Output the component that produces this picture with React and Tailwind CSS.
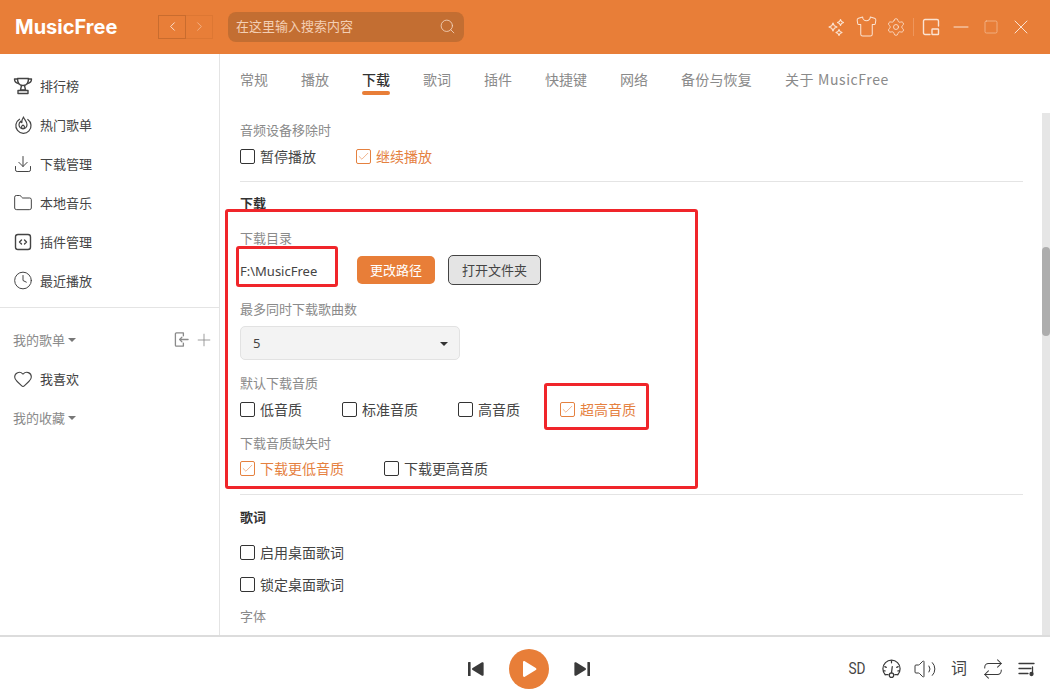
import React from "react";
import {
  Shirt, Settings, Minus, Square, X, ChevronLeft, ChevronRight, Search,
  Download, Folder, Clock, Heart, Plus, Check, Volume2, Repeat,
} from "lucide-react";

const sans = "font-['Noto_Sans_CJK_SC','Noto_Sans',sans-serif]";

function Trophy() {
  return (
    <svg viewBox="0 0 20 20" className="w-5 h-5" fill="none" stroke="currentColor" strokeWidth="1.4" strokeLinejoin="round" strokeLinecap="round">
      <path d="M4.5 2.5h11c0 3.5-.5 7-5.5 7s-5.5-3.5-5.5-7z" />
      <path d="M4.5 3H1.5c0 2.5 1.5 4 4 4.5M15.5 3h3c0 2.500-1.500 4-4 4.500" />
      <path d="M8.500 9.500 7.500 14h5l-1-4.500" />
      <path d="M5 14.500h10v3H5z" />
    </svg>
  );
}
function Hot() {
  return (
    <svg viewBox="0 0 20 20" className="w-5 h-5" fill="none" stroke="currentColor" strokeWidth="1.2" strokeLinecap="round" strokeLinejoin="round">
      <path d="M6.500 4.200A7.600 7.600 0 1 0 14.800 4.500" />
      <path d="M10.500 2c.3 2.200 3.500 4 3.500 7.800a4 4 0 0 1-8 0c0-1.700.8-2.800 1.800-3.600.1.800.4 1.200 1 1.500C8.700 5.500 9.500 3.500 10.500 2z" />
      <path d="M10 10c1 .6 1.500 1.300 1.500 2a1.500 1.500 0 0 1-3 0c0-.7.500-1.400 1.500-2z" />
    </svg>
  );
}
function CodeBox() {
  return (
    <svg viewBox="0 0 20 20" className="w-5 h-5" fill="none" stroke="currentColor" strokeWidth="1.4" strokeLinecap="round" strokeLinejoin="round">
      <rect x="2.500" y="2.500" width="15" height="15" rx="2.500" />
      <path d="M8.500 8 6.500 10l2 2M11.500 8l2 2-2 2" />
    </svg>
  );
}
function ImportIcon() {
  return (
    <svg viewBox="0 0 16 18" className="w-[15px] h-[17px]" fill="none" stroke="currentColor" strokeWidth="1.400" strokeLinecap="round" strokeLinejoin="round">
      <path d="M10 5V2H2.500a1 1 0 0 0-1 1v12a1 1 0 0 0 1 1H10v-3" />
      <path d="M15 9H6M8.500 6.500 6 9l2.500 2.500" />
    </svg>
  );
}
function Gauge() {
  return (
    <svg viewBox="0 0 22 22" className="w-[21px] h-[21px]" fill="none" stroke="currentColor" strokeWidth="1.300" strokeLinecap="round">
      <path d="M4.500 17.500A9 9 0 1 1 17.500 17.500" />
      <path d="M4.500 17.500h3M14.500 17.500h3" />
      <circle cx="11" cy="18" r="2.300" />
      <path d="M11 15.500 11.800 9M11 3v2M4 9l1.500.8M18 9l-1.500.8M2.800 13.500h1.500M19.200 13.500h-1.500" />
    </svg>
  );
}
function Queue() {
  return (
    <svg viewBox="0 0 18 18" className="w-[18px] h-[18px]" fill="none" stroke="currentColor" strokeWidth="1.300" strokeLinecap="round">
      <path d="M1 3.500h15M1 8.500h12M1 13.500h9" />
      <path d="M14.500 7v7" />
      <circle cx="13.500" cy="14" r="1.500" fill="currentColor" />
    </svg>
  );
}
function Prev() {
  return (
    <svg viewBox="0 0 18 16" className="w-[18px] h-4" fill="#3a3a3a">
      <rect x="1" y="1" width="2.600" height="14" rx=".6" />
      <path d="M5 8c0-.5.200-.8.600-1.100L15 1.300c.8-.4 1.600 0 1.600.9v11.600c0 .9-.8 1.300-1.600.9L5.600 9.100C5.200 8.800 5 8.500 5 8z" />
    </svg>
  );
}
function Stars() {
  return (
    <svg viewBox="0 0 18 18" className="w-[18px] h-[18px]" fill="none" stroke="currentColor" strokeWidth="1.100" strokeLinejoin="round">
      <path d="M6 5.500 8 9l-2 3.500L4 9H1l3-.0z" transform="translate(0 0)" opacity="0" />
      <path d="M6 5 7.300 7.700 10 9 7.300 10.300 6 13 4.700 10.300 2 9 4.700 7.700z" />
      <path d="M13.500 1.500 14.500 3.500 16.500 4.500 14.500 5.500 13.500 7.500 12.500 5.500 10.500 4.500 12.500 3.500z" />
      <path d="M12 11.500 13 13.500 15 14.500 13 15.500 12 17.500 11 15.500 9 14.500 11 13.500z" />
    </svg>
  );
}
function Pip() {
  return (
    <svg viewBox="0 0 18 18" className="w-[18px] h-[18px]" fill="none" stroke="currentColor" strokeWidth="1.400" strokeLinecap="round" strokeLinejoin="round">
      <path d="M8 16.500H3a1.500 1.500 0 0 1-1.500-1.500V3A1.500 1.500 0 0 1 3 1.500h12A1.500 1.500 0 0 1 16.500 3v5" />
      <rect x="10" y="11" width="6.500" height="5.500" rx=".5" />
    </svg>
  );
}

function NavItem({ icon, label }) {
  return (
    <div className="h-[39px] flex items-center pl-[13px] gap-[7px] text-[13px] text-[#444444]">
      <span className="w-5 h-5 flex items-center justify-center shrink-0 text-[#444444]">{icon}</span>
      <span>{label}</span>
    </div>
  );
}

function Caret() {
  return <span className="inline-block w-0 h-0 border-x-[4px] border-x-transparent border-t-[4px] border-t-[#777777] ml-[3px] mt-[1px]" />;
}

function Opt({ label, on }) {
  return (
    <div className={"flex items-center gap-[5px] h-[18px] mb-[2px] text-[14px] leading-[18px] " + (on ? "text-[#e5813f]" : "text-[#444444]")}>
      <span className={"w-[15px] h-[15px] rounded-[2px] border flex items-center justify-center shrink-0 " + (on ? "border-[#e5813f]" : "border-[#333333]")}>
        {on && <Check size={13} strokeWidth={1.100} />}
      </span>
      <span>{label}</span>
    </div>
  );
}

function Label({ children, className = "" }) {
  return <div className={"h-5 leading-[18px] text-[13px] text-[#8a8a8a] " + className}>{children}</div>;
}
function Head({ children, className = "" }) {
  return <div className={"h-5 leading-[18px] text-[13px] font-bold text-[#333333] " + className}>{children}</div>;
}

const tabs = ["常规", "播放", "下载", "歌词", "插件", "快捷键", "网络", "备份与恢复", "关于 MusicFree"];
const tabTrack = { "备份与恢复": "tracking-[0.2px]", "关于 MusicFree": "tracking-[0.6px]" };

function WinBtn({ children }) {
  return <span className="w-[30px] flex items-center justify-center shrink-0">{children}</span>;
}
function FootBtn({ children }) {
  return <span className="w-[34px] flex items-center justify-center shrink-0">{children}</span>;
}

export default function App() {
  return (
    <div className={"relative w-[1050px] h-[700px] overflow-hidden bg-white flex flex-col " + sans}>
      <header className="h-[54px] shrink-0 bg-[#e87e38] flex items-center text-[#fbe3d2]">
        <div className="w-[158px] pl-[15px] text-[20px] leading-none font-bold text-white font-['Inter',sans-serif] -mt-[1px]">MusicFree</div>
        <div className="flex h-6 -mt-[1px]">
          <div className="w-7 h-6 border border-[#c96c2e] flex items-center justify-center text-[#fdeadf]"><ChevronLeft size={15} strokeWidth={1.400} /></div>
          <div className="w-[27px] h-6 border border-l-0 border-[#dd7733] flex items-center justify-center text-[#f3b58c]"><ChevronRight size={15} strokeWidth={1.400} /></div>
        </div>
        <div className="ml-[15px] w-[236px] h-[30px] rounded-lg bg-[#c36e32] flex items-center pl-2 pr-[8px] justify-between -mt-[1px]">
          <span className="text-[13px] text-[#f3cfb5] pb-[2px]">在这里输入搜索内容</span>
          <Search size={17} strokeWidth={1.100} className="text-[#f6dcc9]" />
        </div>
        <div className="ml-auto flex items-center pr-[14px] -mt-[1px]">
          <WinBtn><Stars /></WinBtn>
          <WinBtn><Shirt size={23} strokeWidth={1.050} /></WinBtn>
          <WinBtn><Settings size={20} strokeWidth={1} /></WinBtn>
          <span className="w-px h-[18px] bg-[#ee965c] ml-[2px]" />
          <span className="ml-[2px] flex"><WinBtn><Pip /></WinBtn></span>
          <WinBtn><Minus size={24} strokeWidth={1} /></WinBtn>
          <WinBtn><Square size={16} strokeWidth={1} className="text-[#f6c5a3]" /></WinBtn>
          <WinBtn><X size={24} strokeWidth={1} /></WinBtn>
        </div>
      </header>

      <div className="flex-1 min-h-0 flex">
        <aside className="w-[220px] shrink-0 border-r border-[#e4e4e4] pt-[12px]">
          <NavItem icon={<Trophy />} label="排行榜" />
          <NavItem icon={<Hot />} label="热门歌单" />
          <NavItem icon={<Download size={22} strokeWidth={1.200} />} label="下载管理" />
          <NavItem icon={<Folder size={22} strokeWidth={1.200} />} label="本地音乐" />
          <NavItem icon={<CodeBox />} label="插件管理" />
          <NavItem icon={<Clock size={21} strokeWidth={1.200} />} label="最近播放" />
          <div className="mt-[7px] h-px bg-[#e4e4e4]" />
          <div className="mt-[12px] h-[39px] flex items-center pl-[13px] pr-[5px] text-[13px] text-[#8a8a8a]">
            <span>我的歌单</span><Caret />
            <span className="ml-auto flex items-center gap-[5px] text-[#8a8a8a]"><ImportIcon /><Plus size={20} strokeWidth={1} /></span>
          </div>
          <NavItem icon={<Heart size={20} strokeWidth={1.300} />} label="我喜欢" />
          <div className="h-[39px] flex items-center pl-[13px] text-[13px] text-[#8a8a8a]">
            <span>我的收藏</span><Caret />
          </div>
        </aside>

        <main className="flex-1 min-w-0 flex">
          <div className="flex-1 min-w-0 pl-5 pr-[19px]">
            <nav className="h-[52px] flex gap-[33px]">
              {tabs.map((t) => (
                <div key={t} className="pt-4 flex flex-col items-center">
                  <span className={"h-5 leading-[18px] text-[14px] " + (tabTrack[t] || "") + " " + (t === "下载" ? "text-[#333333] font-medium" : "text-[#8a8a8a]")}>{t}</span>
                  <span className={"mt-px h-1 w-full rounded-full " + (t === "下载" ? "bg-[#e87e38]" : "")} />
                </div>
              ))}
            </nav>
            <div className="pt-[15px]">
              <Label>音频设备移除时</Label>
              <div className="mt-[6px] flex gap-10"><Opt label="暂停播放" /><Opt label="继续播放" on /></div>
              <div className="mt-[14px] h-px bg-[#e4e4e4]" />
              <Head className="mt-[12px]">下载</Head>
              <Label className="mt-[15px]">下载目录</Label>
              <div className="mt-[6px] h-[30px] flex items-center">
                <span className="w-[117px] mt-[3px] text-[13px] text-[#444444] font-['Noto_Sans',sans-serif]">F:\MusicFree</span>
                <button className="w-[78px] h-7 rounded-[5px] bg-[#e87e38] text-white text-[13px]">更改路径</button>
                <button className="ml-[13px] w-[93px] h-[30px] rounded-[5px] bg-[#e4e4e4] border border-[#444444] text-[#444444] text-[13px]">打开文件夹</button>
              </div>
              <Label className="mt-[15px]">最多同时下载歌曲数</Label>
              <div className="mt-[6px] w-[220px] h-[34px] rounded-[5px] bg-[#f3f3f3] border border-[#e2e2e2] flex items-center pl-[12px] pr-[11px] justify-between text-[13px] text-[#444444]">
                <span className="font-['Noto_Sans',sans-serif] mt-[2px]">5</span>
                <span className="w-0 h-0 mt-[2px] border-x-[4px] border-x-transparent border-t-[4px] border-t-[#333333]" />
              </div>
              <Label className="mt-[14px]">默认下载音质</Label>
              <div className="mt-[6px] flex gap-10"><Opt label="低音质" /><Opt label="标准音质" /><Opt label="高音质" /><Opt label="超高音质" on /></div>
              <Label className="mt-[14px]">下载音质缺失时</Label>
              <div className="mt-[5px] flex gap-10"><Opt label="下载更低音质" on /><Opt label="下载更高音质" /></div>
              <div className="mt-[15px] h-px bg-[#e4e4e4]" />
              <Head className="mt-[13px]">歌词</Head>
              <div className="mt-[15px]"><Opt label="启用桌面歌词" /></div>
              <div className="mt-[14px]"><Opt label="锁定桌面歌词" /></div>
              <Label className="mt-[14px]">字体</Label>
            </div>
          </div>
          <div className="w-2 shrink-0 mt-[59px] bg-[#e6e6e6]">
            <div className="mt-[134px] h-[89px] rounded-full bg-[#adadad]" />
          </div>
        </main>
      </div>

      <footer className="h-[65px] shrink-0 border-t-[2px] border-[#dcdcdc] flex items-center pl-[467px] pr-[6px] text-[#3a3a3a]">
        <Prev />
        <div className="ml-[24px] w-10 h-10 rounded-full bg-[#e87e38] flex items-center justify-center">
          <svg viewBox="0 0 20 20" className="w-5 h-5" fill="white"><path d="M4 3.300c0-1 1-1.500 1.800-1l11 6.600c.8.500.8 1.700 0 2.200l-11 6.600c-.8.500-1.800 0-1.800-1z" /></svg>
        </div>
        <span className="ml-[24px] -scale-x-100 flex"><Prev /></span>
        <div className="ml-auto flex items-center">
          <FootBtn><span className="text-[16px] font-['Roboto',sans-serif] text-[#444444] scale-x-[0.85]">SD</span></FootBtn>
          <FootBtn><Gauge /></FootBtn>
          <FootBtn><Volume2 size={24} strokeWidth={1} /></FootBtn>
          <FootBtn><span className="text-[16px] leading-none text-[#444444] pb-[3px]">词</span></FootBtn>
          <FootBtn><Repeat size={22} strokeWidth={1.100} /></FootBtn>
          <FootBtn><Queue /></FootBtn>
        </div>
      </footer>

      <div className="absolute left-[225px] top-[209px] w-[473px] h-[280px] rounded-[3px] border-[3px] border-[#f0252a] pointer-events-none" />
      <div className="absolute left-[236px] top-[246px] w-[102px] h-[41px] rounded-[3px] border-[3px] border-[#f0252a] pointer-events-none" />
      <div className="absolute left-[544px] top-[383px] w-[105px] h-[47px] rounded-[3px] border-[3px] border-[#f0252a] pointer-events-none" />
    </div>
  );
}
